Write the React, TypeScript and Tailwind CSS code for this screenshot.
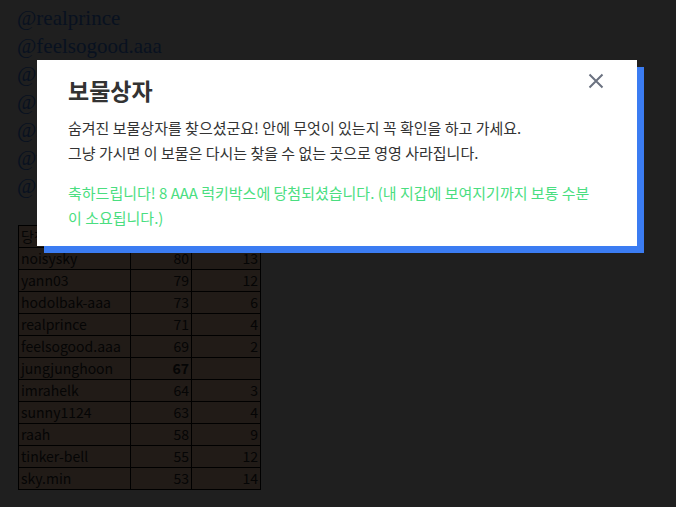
import React from 'react';

interface Row {
  name: string;
  score: number;
  count: number | null;
  bold?: boolean;
}

const handles = ['realprince', 'feelsogood.aaa', 'imrahelk', 'sunny1124', 'raah', 'tinker-bell', 'sky.min'];

const rows: Row[] = [
  { name: 'noisysky', score: 80, count: 13 },
  { name: 'yann03', score: 79, count: 12 },
  { name: 'hodolbak-aaa', score: 73, count: 6 },
  { name: 'realprince', score: 71, count: 4 },
  { name: 'feelsogood.aaa', score: 69, count: 2 },
  { name: 'jungjunghoon', score: 67, count: null, bold: true },
  { name: 'imrahelk', score: 64, count: 3 },
  { name: 'sunny1124', score: 63, count: 4 },
  { name: 'raah', score: 58, count: 9 },
  { name: 'tinker-bell', score: 55, count: 12 },
  { name: 'sky.min', score: 53, count: 14 },
];

const kr = "font-['Noto_Sans_CJK_KR','Noto_Sans',sans-serif]";

export default function App() {
  return (
    <div className="relative min-h-[507px] overflow-hidden bg-[#1f1f1f]">
      {/* 뒤쪽 페이지 (어둡게 가려짐) */}
      <div className="pl-[17px] pt-[4px]">
        <ul className="font-['Liberation_Serif',serif] text-[21px] leading-[28px] text-[#08111f]">
          {handles.map((h) => (
            <li key={h}>@{h}</li>
          ))}
        </ul>

        <table className={`mt-[25px] ml-[1px] border-collapse bg-[#211b17] text-[14px] leading-[21px] text-[#050505] ${kr}`}>
          <thead>
            <tr>
              <th className="h-[22px] w-[112px] border border-black px-[2px] text-left font-normal">당첨자</th>
              <th className="w-[61px] border border-black px-[2px] text-right font-normal">점수</th>
              <th className="w-[69px] border border-black px-[2px] text-right font-normal">순위</th>
            </tr>
          </thead>
          <tbody>
            {rows.map((r) => (
              <tr key={r.name}>
                <td className="h-[22px] border border-black px-[2px]">{r.name}</td>
                <td className={`border border-black px-[2px] text-right ${r.bold ? 'font-bold' : ''}`}>{r.score}</td>
                <td className="border border-black px-[2px] text-right">{r.count ?? ''}</td>
              </tr>
            ))}
          </tbody>
        </table>
      </div>

      {/* 보물상자 모달 */}
      <div className={`absolute left-[37px] top-[60px] w-[600px] bg-white pl-[31px] pr-[40px] pt-[14px] pb-[16px] shadow-[7px_7px_0_#3b7cf2] ${kr}`}>
        <button className="absolute right-[33px] top-[13px] text-[#6b7280]" aria-label="닫기">
          <svg width="16" height="16" viewBox="0 0 16 16" fill="none" stroke="currentColor" strokeWidth="2">
            <path d="M1.5 1.5L14.5 14.5M14.5 1.5L1.5 14.5" />
          </svg>
        </button>
        <h2 className="text-[23px] font-bold leading-[32px] text-[#333]">보물상자</h2>
        <p className="mt-[9px] text-[15px] leading-[25px] text-[#333]">
          숨겨진 보물상자를 찾으셨군요! 안에 무엇이 있는지 꼭 확인을 하고 가세요.
          <br />
          그냥 가시면 이 보물은 다시는 찾을 수 없는 곳으로 영영 사라집니다.
        </p>
        <p className="mt-[15px] text-[15px] leading-[25px] text-[#4ade80]">
          축하드립니다! 8 AAA 럭키박스에 당첨되셨습니다. (내 지갑에 보여지기까지 보통 수분이 소요됩니다.)
        </p>
      </div>
    </div>
  );
}
